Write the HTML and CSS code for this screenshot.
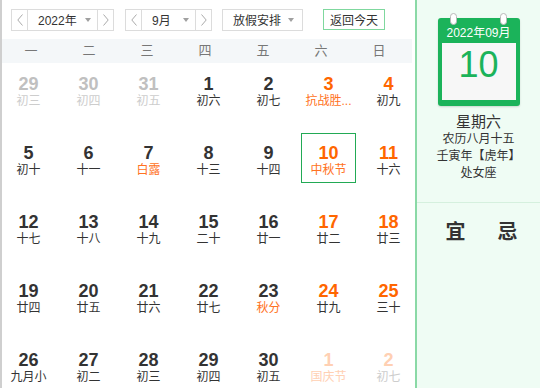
FILE: index.html
```html
<!DOCTYPE html>
<html lang="zh-CN">

<head>
  <meta charset="UTF-8">
  <meta name="viewport" content="width=device-width, initial-scale=1.0">
  <title>万年历</title>
  <link rel="stylesheet" href="styles.css">
</head>

<body>
  <div class="app">
    <!-- 左边：月历 -->
    <div class="main">
      <div class="toolbar">
        <div class="picker year">
          <span class="step"><svg width="6" height="12" viewBox="0 0 6 12"><polyline points="5.5,0.5 0.8,6 5.5,11.5" /></svg></span>
          <span class="val">2022年<i class="caret"></i></span>
          <span class="step"><svg width="6" height="12" viewBox="0 0 6 12"><polyline points="0.5,0.5 5.2,6 0.5,11.5" /></svg></span>
        </div>
        <div class="picker month">
          <span class="step"><svg width="6" height="12" viewBox="0 0 6 12"><polyline points="5.5,0.5 0.8,6 5.5,11.5" /></svg></span>
          <span class="val">9月<i class="caret"></i></span>
          <span class="step"><svg width="6" height="12" viewBox="0 0 6 12"><polyline points="0.5,0.5 5.2,6 0.5,11.5" /></svg></span>
        </div>
        <div class="picker holiday">
          <span class="val">放假安排<i class="caret"></i></span>
        </div>
        <button class="today-btn">返回今天</button>
      </div>

      <div class="week">
        <span>一</span><span>二</span><span>三</span><span>四</span><span>五</span><span>六</span><span>日</span>
      </div>

      <div class="days">
        <div class="day other"><b class="num">29</b><span class="lunar">初三</span></div>
        <div class="day other"><b class="num">30</b><span class="lunar">初四</span></div>
        <div class="day other"><b class="num">31</b><span class="lunar">初五</span></div>
        <div class="day"><b class="num">1</b><span class="lunar">初六</span></div>
        <div class="day"><b class="num">2</b><span class="lunar">初七</span></div>
        <div class="day rest"><b class="num">3</b><span class="lunar fest">抗战胜...</span></div>
        <div class="day rest"><b class="num">4</b><span class="lunar">初九</span></div>

        <div class="day"><b class="num">5</b><span class="lunar">初十</span></div>
        <div class="day"><b class="num">6</b><span class="lunar">十一</span></div>
        <div class="day"><b class="num">7</b><span class="lunar fest">白露</span></div>
        <div class="day"><b class="num">8</b><span class="lunar">十三</span></div>
        <div class="day"><b class="num">9</b><span class="lunar">十四</span></div>
        <div class="day rest active"><b class="num">10</b><span class="lunar fest">中秋节</span></div>
        <div class="day rest"><b class="num">11</b><span class="lunar">十六</span></div>

        <div class="day"><b class="num">12</b><span class="lunar">十七</span></div>
        <div class="day"><b class="num">13</b><span class="lunar">十八</span></div>
        <div class="day"><b class="num">14</b><span class="lunar">十九</span></div>
        <div class="day"><b class="num">15</b><span class="lunar">二十</span></div>
        <div class="day"><b class="num">16</b><span class="lunar">廿一</span></div>
        <div class="day rest"><b class="num">17</b><span class="lunar">廿二</span></div>
        <div class="day rest"><b class="num">18</b><span class="lunar">廿三</span></div>

        <div class="day"><b class="num">19</b><span class="lunar">廿四</span></div>
        <div class="day"><b class="num">20</b><span class="lunar">廿五</span></div>
        <div class="day"><b class="num">21</b><span class="lunar">廿六</span></div>
        <div class="day"><b class="num">22</b><span class="lunar">廿七</span></div>
        <div class="day"><b class="num">23</b><span class="lunar fest">秋分</span></div>
        <div class="day rest"><b class="num">24</b><span class="lunar">廿九</span></div>
        <div class="day rest"><b class="num">25</b><span class="lunar">三十</span></div>

        <div class="day"><b class="num">26</b><span class="lunar">九月小</span></div>
        <div class="day"><b class="num">27</b><span class="lunar">初二</span></div>
        <div class="day"><b class="num">28</b><span class="lunar">初三</span></div>
        <div class="day"><b class="num">29</b><span class="lunar">初四</span></div>
        <div class="day"><b class="num">30</b><span class="lunar">初五</span></div>
        <div class="day other rest"><b class="num">1</b><span class="lunar fest">国庆节</span></div>
        <div class="day other rest"><b class="num">2</b><span class="lunar">初七</span></div>
      </div>
    </div>

    <!-- 右边：当天详情 -->
    <div class="side">
      <div class="page">
        <i class="ring left"></i>
        <i class="ring right"></i>
        <div class="page-head">2022年09月</div>
        <div class="page-day">10</div>
      </div>
      <div class="info">
        <div class="weekday">星期六</div>
        <div>农历八月十五</div>
        <div>壬寅年【虎年】</div>
        <div>处女座</div>
      </div>
      <div class="yiji">
        <span>宜</span>
        <span>忌</span>
      </div>
    </div>
  </div>
</body>

</html>
```

FILE: styles.css
```css
* {
  box-sizing: border-box;
}

body {
  margin: 0;
  font-family: "Liberation Sans", "Noto Sans CJK SC", sans-serif;
  color: #333;
  background: #fff;
}

.app {
  display: flex;
  width: 540px;
  height: 388px;
  overflow: hidden;
}

.main {
  width: 415px;
  flex: none;
  border-left: 2px solid #cfcfcf;
}

/* 顶部选择条 */
.toolbar {
  display: flex;
  align-items: center;
  height: 39px;
  padding: 0 0 0 9px;
}

.picker {
  display: flex;
  height: 22px;
  border: 1px solid #dcdcdc;
  font-size: 12px;
  background: #fff;
}

.picker .step {
  width: 16px;
  display: flex;
  align-items: center;
  justify-content: center;
}

.picker .step:first-child {
  border-right: 1px solid #dcdcdc;
}

.picker .step:last-child {
  border-left: 1px solid #dcdcdc;
}

.picker polyline {
  fill: none;
  stroke: #aaa;
  stroke-width: 1;
}

.picker .val {
  display: flex;
  align-items: center;
  padding: 0 6px 0 10px;
}

.caret {
  margin-left: auto;
  width: 0;
  height: 0;
  border-left: 3.5px solid transparent;
  border-right: 3.5px solid transparent;
  border-top: 4px solid #a0a0a0;
}

.year .val {
  width: 69px;
}

.month {
  margin-left: 11px;
}

.month .val {
  width: 53px;
}

.holiday {
  margin-left: 10px;
  width: 81px;
}

.holiday .val {
  width: 100%;
  padding-right: 8px;
}

.today-btn {
  margin-left: 20px;
  width: 62px;
  height: 21px;
  padding: 0;
  border: 1px solid #7fd89e;
  background: #fff;
  font-family: inherit;
  font-size: 12px;
  color: #333;
}

/* 星期栏 */
.week {
  display: grid;
  grid-template-columns: repeat(7, 58px);
  width: 410px;
  height: 24px;
  line-height: 24px;
  background: #f4f7f9;
  font-size: 13px;
  color: #777;
  text-align: center;
}

/* 日期格子 */
.days {
  display: grid;
  grid-template-columns: repeat(7, 55px);
  grid-auto-rows: 50px;
  column-gap: 5px;
  row-gap: 19px;
  margin-left: -1px;
  padding-top: 1px;
}

.day {
  display: flex;
  flex-direction: column;
  align-items: center;
  padding-top: 9px;
  border: 1px solid transparent;
}

.day .num {
  font-size: 18px;
  line-height: 20px;
  color: #333;
}

.day .lunar {
  font-size: 12px;
  line-height: 15px;
  white-space: nowrap;
  color: #333;
}

.day.rest .num,
.day .lunar.fest {
  color: #ff6600;
}

.day .lunar.fest {
  color: #ff7222;
}

.day.other .num {
  color: #c0c0c0;
}

.day.other .lunar {
  color: #cdcdcd;
}

.day.other.rest .num,
.day.other .lunar.fest {
  color: #ffd0b3;
}

.day.active {
  border-color: #22aa55;
}

/* 右侧 */
.side {
  flex: 1;
  display: flex;
  flex-direction: column;
  align-items: center;
  border-left: 2px solid #8ad9a6;
  background: #effcf4;
}

.page {
  position: relative;
  width: 82px;
  height: 88px;
  margin-top: 18px;
  padding: 0 4px 6px;
  background: #1bb35a;
  border-radius: 3px;
  box-shadow: 0 1px 2px rgba(0, 0, 0, 0.15);
}

.ring {
  position: absolute;
  top: -5px;
  width: 7px;
  height: 12px;
  border: 1px solid #b8b8b8;
  border-radius: 4px;
  background: #fff;
}

.ring.left {
  left: 12px;
}

.ring.right {
  right: 13px;
}

.page-head {
  height: 25px;
  line-height: 30px;
  font-size: 12px;
  color: #fff;
  text-align: center;
}

.page-day {
  height: 57px;
  background: #f7f7f7;
  color: #1bb35a;
  font-size: 36px;
  line-height: 44px;
  text-align: center;
}

.info {
  width: 100%;
  margin-top: 7px;
  padding-bottom: 20px;
  border-bottom: 1px solid #d5f0de;
  text-align: center;
  font-size: 12px;
  line-height: 17px;
}

.info .weekday {
  font-size: 15px;
  line-height: 18px;
}

.yiji {
  display: flex;
  justify-content: center;
  gap: 32px;
  padding: 17px 0 0 6px;
  font-size: 20px;
  line-height: 24px;
  font-weight: bold;
}
```
